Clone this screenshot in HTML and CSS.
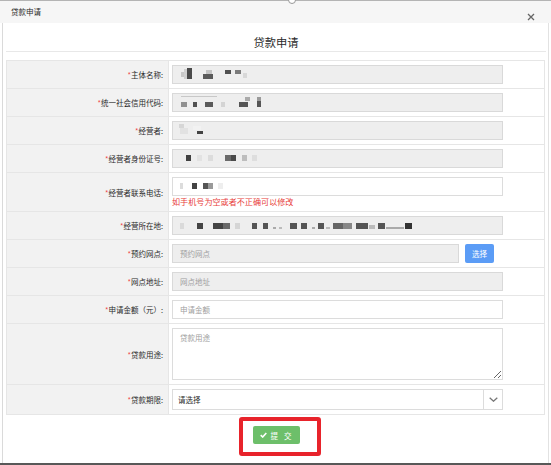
FILE: index.html
```html
<!DOCTYPE html>
<html lang="zh-CN">
<head>
<meta charset="utf-8">
<title>贷款申请</title>
<link rel="stylesheet" href="styles.css">
</head>
<body>
<div class="dialog">
  <span class="top-knob"></span>
  <div class="titlebar">
    <span class="titlebar-text">贷款申请</span>
    <svg class="close" viewBox="0 0 8 8" width="8" height="8"><path d="M1 1L7 7M7 1L1 7" stroke="#666" stroke-width="1.3" fill="none"/></svg>
  </div>
  <div class="frame">
    <h1 class="heading">贷款申请</h1>
    <div class="form-grid">
      <div class="lbl"><i>*</i>主体名称:</div>
      <div class="cell">
        <div class="input ro">
          <svg class="mosaic" viewBox="0 0 329 17" width="329" height="17">
            <rect x="8" y="6" width="4" height="5" fill="#c8c8c8"/>
            <rect x="11" y="3" width="3" height="10" fill="#d0d0d0"/>
            <rect x="14" y="2" width="5" height="11" fill="#4a4a4a"/>
            <rect x="30" y="8" width="10" height="5" fill="#5a5a5a"/>
            <rect x="33" y="4" width="6" height="4" fill="#c4c4c4"/>
            <rect x="52" y="4" width="6" height="4" fill="#505050"/>
            <rect x="62" y="4" width="6" height="4" fill="#7a7a7a"/>
            <rect x="70" y="7" width="4" height="5" fill="#d8d8d8"/>
          </svg>
        </div>
      </div>

      <div class="lbl"><i>*</i>统一社会信用代码:</div>
      <div class="cell">
        <div class="input ro">
          <svg class="mosaic" viewBox="0 0 329 17" width="329" height="17">
            <rect x="8" y="2" width="36" height="1" fill="#c8c8c8"/>
            <rect x="8" y="8" width="6" height="5" fill="#909090"/>
            <rect x="20" y="8" width="4" height="5" fill="#505050"/>
            <rect x="32" y="8" width="8" height="5" fill="#5a5a5a"/>
            <rect x="48" y="8" width="4" height="5" fill="#d4d4d4"/>
            <rect x="66" y="8" width="9" height="5" fill="#555"/>
            <rect x="72" y="3" width="5" height="4" fill="#aaa"/>
            <rect x="84" y="3" width="4" height="4" fill="#9a9a9a"/>
            <rect x="84" y="7" width="4" height="6" fill="#555"/>
          </svg>
        </div>
      </div>

      <div class="lbl"><i>*</i>经营者:</div>
      <div class="cell">
        <div class="input ro">
          <svg class="mosaic" viewBox="0 0 329 17" width="329" height="17">
            <rect x="6" y="2" width="5" height="4" fill="#d6d6d6"/>
            <rect x="7" y="6" width="8" height="6" fill="#e2e2e2"/>
            <rect x="20" y="4" width="8" height="4" fill="#f2f2f2"/>
            <rect x="24" y="9" width="6" height="3" fill="#444"/>
          </svg>
        </div>
      </div>

      <div class="lbl"><i>*</i>经营者身份证号:</div>
      <div class="cell">
        <div class="input ro">
          <svg class="mosaic" viewBox="0 0 329 17" width="329" height="17">
            <rect x="13" y="5" width="5" height="6" fill="#404040"/>
            <rect x="24" y="5" width="5" height="6" fill="#e2e2e2"/>
            <rect x="35" y="5" width="5" height="6" fill="#dcdcdc"/>
            <rect x="52" y="5" width="6" height="6" fill="#6a6a6a"/>
            <rect x="58" y="5" width="5" height="6" fill="#4a4a4a"/>
            <rect x="69" y="5" width="5" height="6" fill="#bdbdbd"/>
            <rect x="79" y="5" width="5" height="6" fill="#dedede"/>
          </svg>
        </div>
      </div>

      <div class="lbl"><i>*</i>经营者联系电话:</div>
      <div class="cell">
        <div class="input">
          <svg class="mosaic" viewBox="0 0 329 17" width="329" height="17">
            <rect x="7" y="5" width="3" height="6" fill="#dcdcdc"/>
            <rect x="19" y="5" width="5" height="6" fill="#444"/>
            <rect x="30" y="5" width="5" height="6" fill="#555"/>
            <rect x="35" y="5" width="5" height="6" fill="#9a9a9a"/>
            <rect x="45" y="5" width="5" height="6" fill="#eee"/>
          </svg>
        </div>
        <p class="hint">如手机号为空或者不正确可以修改</p>
      </div>

      <div class="lbl"><i>*</i>经营所在地:</div>
      <div class="cell">
        <div class="input ro">
          <svg class="mosaic" viewBox="0 0 329 17" width="329" height="17">
            <rect x="7" y="6" width="4" height="6" fill="#dadada"/>
            <rect x="24" y="6" width="6" height="6" fill="#444"/>
            <rect x="40" y="6" width="10" height="6" fill="#444"/>
            <rect x="50" y="6" width="7" height="6" fill="#6a6a6a"/>
            <rect x="62" y="6" width="5" height="6" fill="#d5d5d5"/>
            <rect x="79" y="6" width="5" height="6" fill="#555"/>
            <rect x="90" y="6" width="5" height="6" fill="#555"/>
            <rect x="100" y="10" width="3" height="2" fill="#aaa"/>
            <rect x="106" y="10" width="3" height="2" fill="#bbb"/>
            <rect x="117" y="6" width="7" height="6" fill="#555"/>
            <rect x="128" y="6" width="6" height="6" fill="#555"/>
            <rect x="139" y="10" width="3" height="2" fill="#aaa"/>
            <rect x="145" y="6" width="6" height="6" fill="#555"/>
            <rect x="153" y="10" width="4" height="2" fill="#bbb"/>
            <rect x="160" y="6" width="10" height="6" fill="#666"/>
            <rect x="170" y="6" width="9" height="6" fill="#888"/>
            <rect x="183" y="6" width="12" height="6" fill="#555"/>
            <rect x="196" y="8" width="6" height="4" fill="#bbb"/>
            <rect x="205" y="6" width="7" height="6" fill="#555"/>
            <rect x="213" y="10" width="18" height="2" fill="#aaa"/>
            <rect x="232" y="6" width="7" height="6" fill="#333"/>
          </svg>
        </div>
      </div>

      <div class="lbl"><i>*</i>预约网点:</div>
      <div class="cell">
        <div class="pick">
          <input class="input ro short" type="text" placeholder="预约网点" readonly>
          <button class="btn-pick" type="button">选择</button>
        </div>
      </div>

      <div class="lbl"><i>*</i>网点地址:</div>
      <div class="cell">
        <input class="input ro" type="text" placeholder="网点地址" readonly>
      </div>

      <div class="lbl"><i>*</i>申请金额（元）:</div>
      <div class="cell">
        <input class="input" type="text" placeholder="申请金额">
      </div>

      <div class="lbl"><i>*</i>贷款用途:</div>
      <div class="cell">
        <textarea class="input area" placeholder="贷款用途"></textarea>
      </div>

      <div class="lbl"><i>*</i>贷款期限:</div>
      <div class="cell">
        <div class="select">
          <span class="select-val">请选择</span>
          <span class="select-arrow"><svg viewBox="0 0 9 5" width="9" height="5"><path d="M0.7 0.7L4.5 4.2L8.3 0.7" stroke="#777" stroke-width="1.3" fill="none"/></svg></span>
        </div>
      </div>
    </div>

    <div class="actions">
      <div class="submit-wrap">
        <button class="btn-submit" type="button"><svg viewBox="0 0 7 6" width="7" height="6"><path d="M0.7 3.1L2.7 5L6.3 1" stroke="#fff" stroke-width="1.6" fill="none"/></svg><span>提 交</span></button>
        <span class="annot"></span>
      </div>
    </div>
  </div>
</div>
</body>
</html>
```
FILE: styles.css
```css
* {
  box-sizing: border-box;
  margin: 0;
  padding: 0;
}

html, body {
  width: 551px;
  height: 465px;
  overflow: hidden;
  background: #fff;
}

body {
  font-family: "Noto Sans CJK SC", "Noto Sans", sans-serif;
  font-size: 7.5px;
  color: #333;
}

.dialog {
  position: relative;
  width: 551px;
  height: 465px;
  border-top: 1px solid #b4b4b4;
  border-bottom: 2px solid #585858;
  display: flex;
  flex-direction: column;
}

.top-knob {
  position: absolute;
  left: 288px;
  top: -5px;
  width: 8px;
  height: 8px;
  border: 1px solid #999;
  border-radius: 50%;
  background: #fff;
}

.titlebar {
  height: 22px;
  flex: none;
  background: #f6f6f6;
  display: flex;
  justify-content: space-between;
  padding-left: 11px;
}

.titlebar-text {
  line-height: 22px;
  color: #2a2a2a;
}

.close {
  align-self: flex-end;
  margin: 0 16px 2px 0;
}

.frame {
  flex: 1;
  margin: 0 2px;
  border-left: 1px solid #dadada;
  border-right: 1px solid #e2e2e2;
  padding: 0 2px 0 3px;
}

.heading {
  font-size: 11.25px;
  font-weight: normal;
  line-height: 18px;
  padding-top: 10px;
  text-align: center;
  color: #2a2a2a;
  border-bottom: 1px solid #e8e8e8;
}

.form-grid {
  margin-top: 8px;
  width: 539px;
  display: grid;
  grid-template-columns: 162px 376px;
  border-top: 1px solid #e6e6e6;
  border-left: 1px solid #e6e6e6;
}

.lbl {
  background: #f2f2f2;
  border-right: 1px solid #e6e6e6;
  border-bottom: 1px solid #e6e6e6;
  display: flex;
  align-items: center;
  justify-content: flex-end;
  padding-right: 5px;
  color: #2a2a2a;
}

.lbl i {
  font-style: normal;
  color: #f04747;
}

.cell {
  border-right: 1px solid #e6e6e6;
  border-bottom: 1px solid #e6e6e6;
  padding: 4px 0 4px 3px;
}

.input {
  display: block;
  width: 331px;
  height: 19px;
  border: 1px solid #dcdcdc;
  background: #fff;
  font-family: inherit;
  font-size: 7.5px;
  color: #333;
  padding: 0 7px;
  outline: none;
  overflow: hidden;
}

.input.ro {
  background: #eee;
  border-color: #d9d9d9;
}

div.input {
  padding: 0;
}

.input::placeholder {
  color: #a0a0a0;
}

.mosaic {
  display: block;
}

.hint {
  margin-top: 1px;
  font-size: 8.1px;
  line-height: 10px;
  color: #e8403a;
}

.pick {
  display: flex;
  gap: 6px;
}

.input.short {
  width: 287px;
}

.btn-pick {
  width: 29px;
  height: 19px;
  border: none;
  border-radius: 2px;
  background: #5b9cf6;
  color: #fff;
  font-family: inherit;
  font-size: 7.5px;
}

.area {
  height: 52px;
  padding: 4px 7px;
  resize: vertical;
  line-height: 10px;
}

.select {
  display: flex;
  width: 331px;
  height: 21px;
  border: 1px solid #dcdcdc;
  background: #fff;
}

.select-val {
  flex: 1;
  padding-left: 5px;
  line-height: 19px;
  color: #2a2a2a;
}

.select-arrow {
  width: 19px;
  border-left: 1px solid #dcdcdc;
  display: flex;
  align-items: center;
  justify-content: center;
}

.actions {
  display: flex;
  justify-content: center;
  padding-top: 11px;
}

.submit-wrap {
  position: relative;
}

.btn-submit {
  width: 47px;
  height: 18px;
  border: none;
  border-radius: 2px;
  background: #6dbf6a;
  color: #fff;
  font-family: inherit;
  font-size: 7.5px;
  display: flex;
  align-items: center;
  justify-content: center;
  gap: 3px;
  word-spacing: 4.5px;
}

.annot {
  position: absolute;
  left: -14px;
  top: -9px;
  width: 82px;
  height: 39px;
  border: 4px solid #e8232b;
  border-radius: 3px;
}
```
